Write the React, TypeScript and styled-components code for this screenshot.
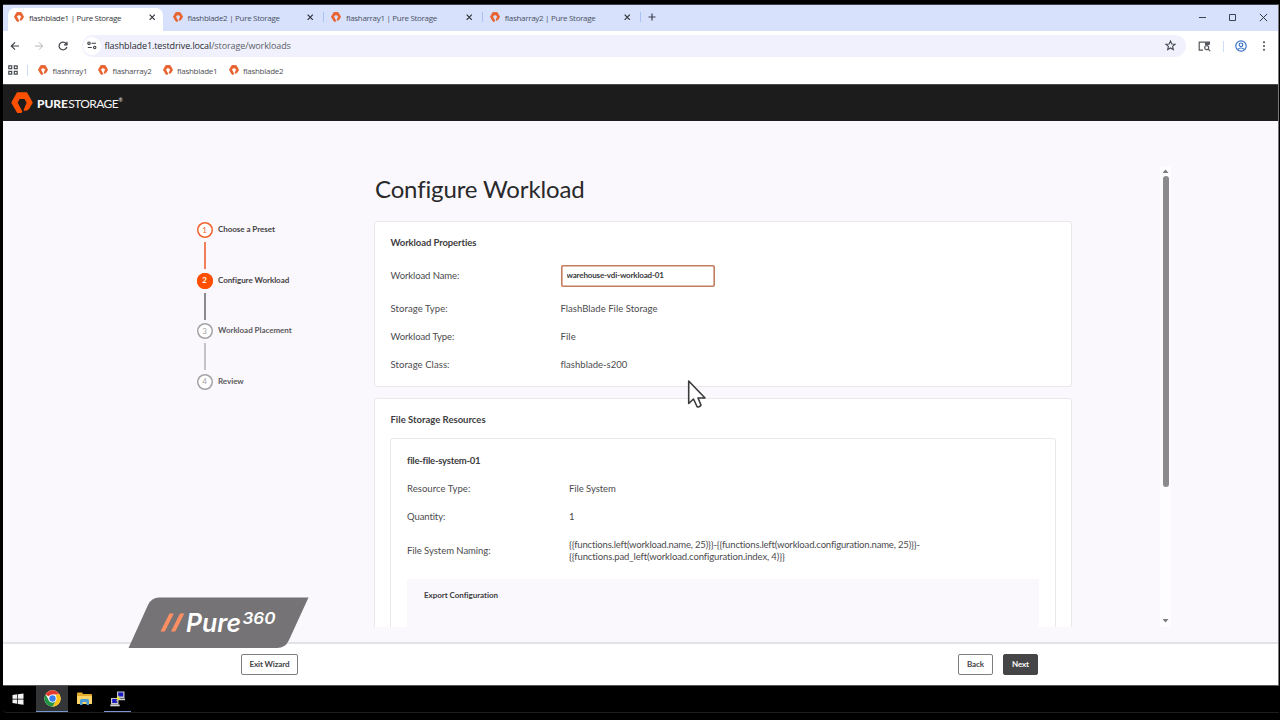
import React from "react";
import styled, {createGlobalStyle, css} from "styled-components";

//region Types
type TrackProps = {
    $track?: number
}

type StepState = "done" | "active" | "next" | "idle";

type Field = {
    label: string,
    labelTrack?: number,
    value: React.ReactNode,
    track?: number
}

type PureMarkProps = {
    size: number,
    color?: string,
    weight?: number
}
//endregion

//region Data
const tabs = ["flashblade1", "flashblade2", "flasharray1", "flasharray2"];

const bookmarks = [
    {name: "flashrray1", width: 60},
    {name: "flasharray2", width: 64.5},
    {name: "flashblade1", width: 66},
    {name: "flashblade2", width: 60},
];

const steps: {name: string, state: StepState}[] = [
    {name: "Choose a Preset", state: "done"},
    {name: "Configure Workload", state: "active"},
    {name: "Workload Placement", state: "next"},
    {name: "Review", state: "idle"},
];

const properties: Field[] = [
    {label: "Storage Type:", labelTrack: 0.08, value: "FlashBlade File Storage", track: 0.03},
    {label: "Workload Type:", value: "File", track: 0.1},
    {label: "Storage Class:", labelTrack: 0.07, value: "flashblade-s200", track: 0.02},
];

const resources: Field[] = [
    {label: "Resource Type:", labelTrack: 0.04, value: "File System"},
    {label: "Quantity:", value: "1"},
];

const naming = [
    "{{functions.left(workload.name, 25)}}-{{functions.left(workload.configuration.name, 25)}}-",
    "{{functions.pad_left(workload.configuration.index, 4)}}",
];
//endregion

//region Styled
const GlobalStyle = createGlobalStyle`
    * {
        box-sizing: border-box;
    }

    body {
        margin: 0;
        background: #000;
        font-family: Lato, "Liberation Sans", sans-serif;
        color: #4c4b4e;
    }

    svg {
        display: block;
        flex: none;
    }
`;

const Screen = styled.div`
    width: 1280px;
    height: 720px;
    position: relative;
    overflow: hidden;
    background: #000;
    padding: 4px 1px 0 3px;
`;

const Window = styled.div`
    height: 682px;
    display: flex;
    flex-direction: column;
    border-top: 1px solid #3c4148;
    border-right: 1px solid #77787b;
    border-bottom: 1px solid #55565a;
    background: #fff;
`;

const TabStrip = styled.div`
    height: 26px;
    flex: none;
    display: flex;
    align-items: flex-end;
    background: #d7e1fc;
    padding-left: 5px;
    font-family: "Open Sans", "Noto Sans", sans-serif;
`;

const Tab = styled.div<{$active?: boolean}>`
    width: ${props => props.$active ? 155 : 158.6}px;
    margin-right: ${props => props.$active ? 1.5 : 0}px;
    height: 23px;
    display: flex;
    align-items: center;
    padding: 0 8px 5px 6px;
    border-radius: 7px 7px 0 0;
    background: ${props => props.$active ? "#fff" : "transparent"};
    color: ${props => props.$active ? "#33363b" : "#4a5163"};
    font-size: 8px;
    letter-spacing: -0.3px;
    white-space: nowrap;

    ${props => !props.$active && css`
        position: relative;
        padding-left: 8px;
        padding-right: 9.5px;

        &::after {
            content: "";
            position: absolute;
            right: -1px;
            top: 4px;
            width: 1px;
            height: 10px;
            background: #a9c2f3;
        }
    `}
`;

const TabTitle = styled.span`
    flex: 1;
    margin-left: 5px;
`;

const NewTab = styled.div`
    height: 23px;
    padding: 5px 0 0 8px;
`;

const WindowControls = styled.div`
    height: 26px;
    margin-left: auto;
    padding: 8px 10.5px 0 0;
    display: flex;
    gap: 21.5px;
`;

const Toolbar = styled.div`
    height: 29px;
    flex: none;
    display: flex;
    align-items: center;
    padding: 1px 9px 0 7px;
`;

const NavButtons = styled.div`
    width: 72px;
    display: flex;
    align-items: center;
    gap: 14px;
`;

const AddressBar = styled.div`
    width: 1104px;
    height: 22px;
    display: flex;
    align-items: center;
    border-radius: 11px;
    background: #f0f1fd;
    padding: 0 10px 1px 1px;
    color: #5b5e66;
    font-family: "Open Sans", "Noto Sans", sans-serif;
    font-size: 9px;
    letter-spacing: -0.1px;

    b {
        color: #292b30;
        font-weight: 400;
    }
`;

const SiteInfo = styled.div`
    width: 18px;
    height: 18px;
    margin-right: 3.5px;
    display: flex;
    align-items: center;
    justify-content: center;
    border-radius: 9px;
    background: #fff;
`;

const Address = styled.span`
    flex: 1;
`;

const ToolbarActions = styled.div`
    flex: 1;
    display: flex;
    align-items: center;
    justify-content: space-between;
    padding-left: 12px;
`;

const Separator = styled.div`
    width: 1px;
    height: 11px;
    background: #cfdcf8;
`;

const Bookmarks = styled.div`
    height: 24px;
    flex: none;
    display: flex;
    align-items: center;
    padding: 0 0 4px 5px;
    color: #4d5056;
    font-family: "Open Sans", "Noto Sans", sans-serif;
    font-size: 8px;
    letter-spacing: -0.26px;

    ${Separator} {
        margin: 0 10px 0 9px;
    }
`;

const Bookmark = styled.div<{$width: number}>`
    width: ${props => props.$width}px;
    display: flex;
    align-items: center;
    gap: 4.5px;
`;

const Header = styled.div`
    height: 37px;
    flex: none;
    display: flex;
    align-items: center;
    background: #1c1c1c;
    border-top: 1px solid #4b4b4b;
    padding-left: 7.5px;
    color: #f4f4f4;
`;

const Brand = styled.div`
    display: flex;
    align-items: baseline;
    margin-left: 4.5px;
    padding-top: 1px;
    font-size: 12px;
    font-weight: 400;
    line-height: 14px;
    letter-spacing: -0.6px;

    b {
        font-weight: 900;
        letter-spacing: -0.1px;
        margin-right: 0.5px;
    }

    sup {
        font-size: 5px;
        line-height: 1;
        margin: 1px 0 0 0.5px;
        align-self: flex-start;
    }
`;

const Body = styled.div`
    height: 521px;
    flex: none;
    display: flex;
    background: #faf8fc;
    padding: 45px 105px 15px 194px;
`;

const Steps = styled.div`
    width: 177px;
    flex: none;
    padding-top: 56px;
    display: flex;
    flex-direction: column;
`;

const stepColors = {
    done: "#f0622d",
    active: "#fe5000",
    next: "#a3a2a5",
    idle: "#a3a2a5",
};

const lineColors = {
    done: "#ee6a3b",
    active: "#77767a",
    next: "#b9b8bb",
    idle: "transparent",
};

const Step = styled.div<{$state: StepState}>`
    height: 50.6px;
    display: flex;
    position: relative;
    color: ${props => props.$state === "next" || props.$state === "idle" ? "#5b5a5e" : "#434245"};
    font-size: 8px;
    font-weight: 700;
    line-height: 15px;
    letter-spacing: -0.04px;

    &::after {
        content: "";
        position: absolute;
        left: 6.5px;
        top: 20px;
        width: 2px;
        height: 27px;
        background: ${props => lineColors[props.$state]};
        opacity: 0.85;
    }
`;

const Bullet = styled.div<{$state: StepState}>`
    width: 16px;
    height: 16px;
    margin: 0 5.5px 0 -0.5px;
    display: flex;
    align-items: center;
    justify-content: center;
    border-radius: 50%;
    box-shadow: inset 0 0 0 1.5px ${props => stepColors[props.$state]};
    background: ${props => props.$state === "active" ? "#fe5000" : "#fff"};
    color: ${props => props.$state === "active" ? "#fff" : stepColors[props.$state]};
    font-weight: ${props => props.$state === "active" ? 700 : 400};
`;

const Viewport = styled.div`
    width: 698px;
    flex: none;
    overflow: hidden;
`;

const Title = styled.h1`
    height: 55px;
    margin: 0;
    padding: 4px 0 0 1px;
    color: #29292b;
    font-size: 24px;
    font-weight: 400;
    line-height: 38px;
    letter-spacing: -0.14px;
    white-space: nowrap;
    font-variant-ligatures: none;
`;

const Card = styled.div<{$height: number}>`
    height: ${props => props.$height}px;
    border: 1px solid #e8e7ea;
    border-radius: 3px;
    background: #fff;
    padding: 7px 15.5px 0;
    margin-bottom: 11px;
`;

const CardTitle = styled.div<TrackProps>`
    height: 28px;
    color: #3e3d40;
    font-size: 9.5px;
    font-weight: 700;
    line-height: 28px;
    letter-spacing: ${props => props.$track ?? -0.1}px;
    font-variant-ligatures: none;
`;

const FieldRow = styled.div<{$height?: number, $labelWidth?: number}>`
    height: ${props => props.$height || 28}px;
    display: grid;
    grid-template-columns: ${props => props.$labelWidth || 170}px 1fr;
    align-items: center;
    font-size: 9.5px;
    line-height: 12px;
    font-variant-ligatures: none;
`;

const Label = styled.div<TrackProps>`
    letter-spacing: ${props => props.$track ?? -0.1}px;
    white-space: nowrap;
`;

const Value = styled.div<TrackProps>`
    letter-spacing: ${props => props.$track ?? -0.05}px;
    white-space: nowrap;
`;

const NamingTail = styled.span`
    letter-spacing: -0.12px;
`;

const NameInput = styled.input`
    width: 154px;
    height: 22px;
    border: 0;
    box-shadow: inset 0 0 0 1.6px #c47c5f;
    border-radius: 2px;
    outline: none;
    padding: 0 6px 1px;
    color: #3a393c;
    font-family: inherit;
    font-size: 8px;
    font-weight: 700;
    letter-spacing: -0.16px;
`;

const ResourceCard = styled(Card)`
    margin: 4px 0 0 -0.5px;
    padding: 8px 16px 0;
`;

const ExportPanel = styled.div`
    height: 90px;
    margin-top: 8px;
    padding-left: 17px;
    background: #faf8fc;
    color: #3e3d40;
    font-size: 8px;
    font-weight: 700;
    line-height: 33px;
    letter-spacing: -0.04px;
    font-variant-ligatures: none;
`;

const Scrollbar = styled.div`
    width: 11px;
    margin-left: 88px;
    padding: 3px 0 4px;
    display: flex;
    flex-direction: column;
    align-items: center;
    background: #fdfcfe;
`;

const Thumb = styled.div`
    width: 6px;
    height: 311px;
    margin: 3px 0 auto;
    border-radius: 3px;
    background: #8b8a8d;
`;

const Footer = styled.div`
    flex: 1;
    display: flex;
    align-items: flex-start;
    gap: 10px;
    border-top: 2px solid #e3e2e5;
    background: #fff;
    padding: 10px 240px 0 238px;
`;

const Button = styled.button<{$width: number, $primary?: boolean}>`
    width: ${props => props.$width}px;
    height: 21px;
    border: 1px solid ${props => props.$primary ? "#454446" : "#7f7e81"};
    border-radius: 2px;
    background: ${props => props.$primary ? "#454446" : "#fff"};
    padding: 0 0 1px;
    color: ${props => props.$primary ? "#fff" : "#454447"};
    font-family: inherit;
    font-size: 8px;
    font-weight: 700;
    letter-spacing: -0.1px;

    &:first-child {
        margin-right: auto;
    }
`;

const Taskbar = styled.div`
    height: 27px;
    display: flex;
    border-bottom: 1px solid #1d1d1d;
    border-radius: 0 0 0 4px;
    background: #000;
`;

const TaskButton = styled.div<{$width: number, $active?: boolean, $running?: boolean}>`
    width: ${props => props.$width}px;
    height: 26px;
    display: flex;
    align-items: center;
    justify-content: center;
    background: ${props => props.$active ? "#343536" : "transparent"};
    border-bottom: 1px solid ${props => props.$active || props.$running ? "#7898cf" : "transparent"};
`;

const StartButton = styled(TaskButton)`
    padding: 1px 4px 0 0;
`;

const Watermark = styled.svg`
    position: absolute;
    left: 128px;
    top: 597px;
    font-family: Inter, "Liberation Sans", sans-serif;
    font-style: italic;
`;

const Pointer = styled.svg`
    position: absolute;
    left: 686px;
    top: 378px;
`;
//endregion

//region Icons
const PureMark = ({size, color = "#e8632f", weight = 6}: PureMarkProps) => (
    <svg width={size} height={size} viewBox="-1 -1 66 66" fill={color} stroke={color} strokeWidth={weight} strokeLinejoin="round">
        <path d="M29 60H19L2 31 18 2h28l16 29-9 16q-3 6-9 6H39L48 31 41 18H23.500L16.500 31 31 58Z"/>
    </svg>
);

const Cross = ({size, width = 1.2}: {size: number, width?: number}) => (
    <svg width={size} height={size} viewBox="0 0 10 10" stroke="#30343c" strokeWidth={width * 10 / size}>
        <path d="M1 1l8 8M9 1L1 9"/>
    </svg>
);

const Chrome = () => (
    <svg width="17" height="17" viewBox="0 0 48 48">
        <circle cx="24" cy="24" r="23" fill="#fff"/>
        <path d="M24 24L4.100 12.500A23 23 0 0 1 43.900 12.500L44 13H24Z" fill="#e33b2e"/>
        <path d="M43.900 12.500A23 23 0 0 1 24 47L33.500 29.500 33 13H44Z" fill="#fbc116"/>
        <path d="M4.100 12.500A23 23 0 0 0 24 47L33.500 29.500 24 35 14.500 29.500Z" fill="#229342"/>
        <circle cx="24" cy="24" r="11.500" fill="#fff"/>
        <circle cx="24" cy="24" r="9" fill="#3a7ded"/>
    </svg>
);

const Folder = () => (
    <svg width="15" height="13" viewBox="0 0 15 13">
        <path d="M0 1.500Q0 .5 1 .5h4l1.200 1.500H14q1 0 1 1V12H0Z" fill="#e5a930"/>
        <path d="M0 4h15v7.500q0 .5-.5.5H.5Q0 12 0 11.500Z" fill="#fbd667"/>
        <path d="M3 13V8.500Q3 7 4.500 7h6Q12 7 12 8.500V13h-2.500v-3h-4v3Z" fill="#4b9bd7"/>
    </svg>
);

const Putty = () => (
    <svg width="16" height="16" viewBox="0 0 16 16">
        <rect x="7" y=".5" width="7.500" height="6.500" fill="#c7c8cb"/>
        <rect x="8.200" y="1.500" width="5" height="4" fill="#1717c4"/>
        <path d="M6.500 7.500h8.500v1.700H6.500Z" fill="#d5d5d5"/>
        <rect x="1" y="7" width="7.500" height="6.500" fill="#c7c8cb"/>
        <rect x="2.200" y="8" width="5" height="4" fill="#1717c4"/>
        <path d="M.3 13.500h9.400v1.800H.3Z" fill="#d5d5d5"/>
        <path d="M9.500 4.200L5.500 8h2.200L5.200 11 10.500 7.200H8Z" fill="#f4ee1c"/>
    </svg>
);
//endregion

const Browser = () => (
    <>
        <TabStrip>
            {tabs.map((name, index) => (
                <Tab key={name} $active={index === 0}>
                    <PureMark size={10}/>
                    <TabTitle>{name} | Pure Storage</TabTitle>
                    <Cross size={6.5}/>
                </Tab>
            ))}
            <NewTab>
                <svg width="8" height="8" viewBox="0 0 8 8" stroke="#3c4250" strokeWidth="1.200"><path d="M4 .5v7M.5 4h7"/></svg>
            </NewTab>
            <WindowControls>
                <svg width="9" height="9" viewBox="0 0 9 9" stroke="#3b414e"><path d="M1 4.500h7"/></svg>
                <svg width="9" height="9" viewBox="0 0 9 9" fill="none" stroke="#3b414e"><path d="M1.500 1.500h6v6h-6Z"/></svg>
                <Cross size={9} width={1}/>
            </WindowControls>
        </TabStrip>
        <Toolbar>
            <NavButtons>
                <svg width="10" height="10" viewBox="0 0 10 10" fill="none" stroke="#3f4247" strokeWidth="1.200"><path d="M9 5H1.500M5 1.300L1.300 5 5 8.700"/></svg>
                <svg width="10" height="10" viewBox="0 0 10 10" fill="none" stroke="#b4b6ba"><path d="M1 5h7.500M5 1.300L8.700 5 5 8.700"/></svg>
                <svg width="10" height="10" viewBox="0 0 10 10" fill="none" stroke="#3f4247" strokeWidth="1.200"><path d="M8.800 6A3.900 3.900 0 1 1 8 2.500L9 3.600M9 .8v3H6"/></svg>
            </NavButtons>
            <AddressBar>
                <SiteInfo>
                    <svg width="10" height="9" viewBox="0 0 10 9" fill="none" stroke="#3f4247" strokeWidth="1.100">
                        <path d="M4.500 2.200H9M.8 6.500h4"/>
                        <circle cx="2" cy="2.200" r="1.200"/>
                        <circle cx="7.700" cy="6.500" r="1.200"/>
                    </svg>
                </SiteInfo>
                <Address><b>flashblade1.testdrive.local</b>/storage/workloads</Address>
                <svg width="11" height="11" viewBox="0 0 10 10" fill="none" stroke="#484b52">
                    <path d="M5 .9l1.200 2.700 2.900.3-2.200 1.900.7 2.900L5 7.200 2.400 8.700l.7-2.900L.9 3.900l2.900-.3Z"/>
                </svg>
            </AddressBar>
            <ToolbarActions>
                <svg width="13" height="11" viewBox="0 0 13 11" fill="none" stroke="#55575c" strokeWidth="1.200">
                    <path d="M5 9.200H1.200V1.200h10.200v2"/>
                    <path d="M7 1.200h4.500V4H7Z" fill="#55575c" stroke="none"/>
                    <circle cx="8.700" cy="6.700" r="2"/>
                    <path d="M10.200 8.200l2 2"/>
                </svg>
                <Separator/>
                <svg width="12" height="12" viewBox="0 0 12 12" fill="none" stroke="#3c73cc" strokeWidth="1.200">
                    <circle cx="6" cy="6" r="5.200"/>
                    <circle cx="6" cy="4.800" r="1.800"/>
                    <path d="M2.500 9.500Q6 6.500 9.500 9.500"/>
                </svg>
                <svg width="10" height="10" viewBox="0 0 10 10" fill="#45484d">
                    <circle cx="5" cy="1.200" r="1"/>
                    <circle cx="5" cy="5" r="1"/>
                    <circle cx="5" cy="8.800" r="1"/>
                </svg>
            </ToolbarActions>
        </Toolbar>
        <Bookmarks>
            <svg width="10" height="10" viewBox="0 0 10 10" fill="none" stroke="#4a4d52" strokeWidth="1.200">
                <path d="M.8.8h2.900v2.900H.8ZM6.300.8h2.900v2.900H6.300ZM.8 6.300h2.900v2.900H.8ZM6.300 6.300h2.900v2.900H6.300Z"/>
            </svg>
            <Separator/>
            {bookmarks.map(item => (
                <Bookmark key={item.name} $width={item.width}>
                    <PureMark size={10}/>
                    {item.name}
                </Bookmark>
            ))}
        </Bookmarks>
    </>
);

const Fields = ({items, labelWidth}: {items: Field[], labelWidth?: number}) => (
    <>
        {items.map(item => (
            <FieldRow key={item.label} $labelWidth={labelWidth}>
                <Label $track={item.labelTrack}>{item.label}</Label>
                <Value $track={item.track}>{item.value}</Value>
            </FieldRow>
        ))}
    </>
);

const App = () => (
    <Screen>
        <GlobalStyle/>
        <Window>
            <Browser/>
            <Header>
                <PureMark size={22} color="#fe5000" weight={4}/>
                <Brand><b>PURE</b>STORAGE<sup>®</sup></Brand>
            </Header>
            <Body>
                <Steps>
                    {steps.map((step, index) => (
                        <Step key={step.name} $state={step.state}>
                            <Bullet $state={step.state}>{index + 1}</Bullet>
                            {step.name}
                        </Step>
                    ))}
                </Steps>
                <Viewport>
                    <Title>Configure Workload</Title>
                    <Card $height={166}>
                        <CardTitle>Workload Properties</CardTitle>
                        <FieldRow $height={37.5}>
                            <Label>Workload Name:</Label>
                            <NameInput defaultValue="warehouse-vdi-workload-01"/>
                        </FieldRow>
                        <Fields items={properties}/>
                    </Card>
                    <Card $height={400}>
                        <CardTitle $track={0}>File Storage Resources</CardTitle>
                        <ResourceCard $height={300}>
                            <CardTitle $track={-0.24}>file-file-system-01</CardTitle>
                            <Fields items={resources} labelWidth={162}/>
                            <FieldRow $height={40} $labelWidth={162}>
                                <Label $track={-0.04}>File System Naming:</Label>
                                <Value $track={-0.17}>{naming[0]}<br/><NamingTail>{naming[1]}</NamingTail></Value>
                            </FieldRow>
                            <ExportPanel>Export Configuration</ExportPanel>
                        </ResourceCard>
                    </Card>
                </Viewport>
                <Scrollbar>
                    <svg width="7" height="4" viewBox="0 0 7 4" fill="#7b7a7d"><path d="M.5 4L3.500.5 6.500 4Z"/></svg>
                    <Thumb/>
                    <svg width="7" height="4" viewBox="0 0 7 4" fill="#7b7a7d"><path d="M.5 0L3.500 3.500 6.500 0Z"/></svg>
                </Scrollbar>
            </Body>
            <Footer>
                <Button $width={57}>Exit Wizard</Button>
                <Button $width={35}>Back</Button>
                <Button $width={35} $primary>Next</Button>
            </Footer>
        </Window>
        <Taskbar>
            <StartButton $width={33}>
                <svg width="12" height="12" viewBox="0 0 12 12" fill="#f2f2f2">
                    <path d="M.5 2L5.200 1.300V5.700H.5ZM5.900 1.200L11.500.4V5.700H5.900ZM.5 6.400H5.200V10.800L.5 10.100ZM5.900 6.400H11.500V11.700L5.900 10.900Z"/>
                </svg>
            </StartButton>
            <TaskButton $width={32} $active><Chrome/></TaskButton>
            <TaskButton $width={33}><Folder/></TaskButton>
            <TaskButton $width={3}/>
            <TaskButton $width={27} $running><Putty/></TaskButton>
        </Taskbar>
        <Watermark width="182" height="52" viewBox="0 0 182 52">
            <path d="M.5 51L20 8Q23.500.5 31 .5H180.500L161 43Q157.500 51 149 51Z" fill="#6f6d70" fillOpacity=".96"/>
            <path d="M32.500 34.500L41.500 16.500h4.300L36.800 34.500ZM43 34.500L52 16.500h4.300L47.300 34.500Z" fill="#ff8f63"/>
            <text x="58" y="35" fill="#fff" fontSize="25" fontWeight="600" textLength="55" lengthAdjust="spacingAndGlyphs">Pure</text>
            <text x="114.500" y="26.500" fill="#fff" fontSize="16" fontWeight="600" textLength="33" lengthAdjust="spacingAndGlyphs">360</text>
        </Watermark>
        <Pointer width="22" height="32" viewBox="0 0 22 32">
            <path d="M2.700 3V25.500L7.500 21 11 28.500Q13 30 15 27L12 20H19Z" fill="#fff" stroke="#3a3a3d" strokeWidth="1.600" strokeLinejoin="round"/>
        </Pointer>
    </Screen>
);

export default App;
